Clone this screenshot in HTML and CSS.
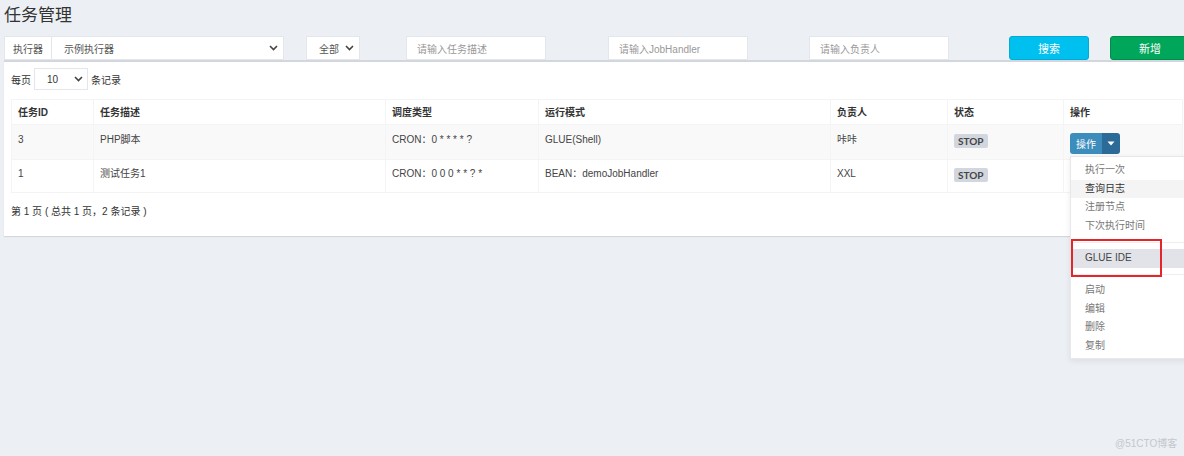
FILE: index.html
```html
<!DOCTYPE html>
<html lang="zh-CN">
<head>
<meta charset="utf-8">
<title>任务管理</title>
<link rel="stylesheet" href="styles.css">
</head>
<body>
<div class="page">
  <h1 class="title">任务管理</h1>
  <div class="toolbar">
    <div class="group">
      <span class="addon">执行器</span>
      <div class="fake-select wide"><span>示例执行器</span><svg class="chev" width="9" height="6" viewBox="0 0 9 6"><path d="M1 1l3.5 3.5L8 1" fill="none" stroke="#444" stroke-width="1.6"/></svg></div>
    </div>
    <div class="fake-select status"><span>全部</span><svg class="chev" width="9" height="6" viewBox="0 0 9 6"><path d="M1 1l3.5 3.5L8 1" fill="none" stroke="#444" stroke-width="1.6"/></svg></div>
    <div class="input in1">请输入任务描述</div>
    <div class="input in2">请输入JobHandler</div>
    <div class="input in3">请输入负责人</div>
    <button class="btn btn-search">搜索</button>
    <button class="btn btn-add">新增</button>
  </div>

  <div class="box">
    <div class="length">
      <span>每页</span>
      <div class="fake-select len"><span>10</span><svg class="chev" width="9" height="6" viewBox="0 0 9 6"><path d="M1 1l3.5 3.5L8 1" fill="none" stroke="#444" stroke-width="1.6"/></svg></div>
      <span>条记录</span>
    </div>
    <table class="grid">
      <colgroup>
        <col class="c1"><col class="c2"><col class="c3"><col class="c4"><col class="c5"><col class="c6"><col class="c7">
      </colgroup>
      <thead>
        <tr><th>任务ID</th><th>任务描述</th><th>调度类型</th><th>运行模式</th><th>负责人</th><th>状态</th><th>操作</th></tr>
      </thead>
      <tbody>
        <tr class="odd">
          <td>3</td><td>PHP脚本</td><td>CRON：0 * * * * ?</td><td>GLUE(Shell)</td><td>咔咔</td>
          <td><span class="label">STOP</span></td>
          <td>
            <div class="btn-group">
              <button class="op">操作</button><button class="op caret-btn"><svg width="8" height="5" viewBox="0 0 8 5"><path d="M0.5 0.5h7L4 4.5z" fill="#fff"/></svg></button>
              <ul class="menu">
                <li>执行一次</li>
                <li class="hover">查询日志</li>
                <li>注册节点</li>
                <li>下次执行时间</li>
                <li class="divider first"></li>
                <li class="active">GLUE IDE</li>
                <li class="divider"></li>
                <li>启动</li>
                <li>编辑</li>
                <li>删除</li>
                <li>复制</li>
                <li class="mark"></li>
              </ul>
            </div>
          </td>
        </tr>
        <tr>
          <td>1</td><td>测试任务1</td><td>CRON：0 0 0 * * ? *</td><td>BEAN：demoJobHandler</td><td>XXL</td>
          <td><span class="label">STOP</span></td>
          <td></td>
        </tr>
      </tbody>
    </table>
    <div class="info">第 1 页 ( 总共 1 页，2 条记录 )</div>
  </div>
</div>
<div class="watermark">@51CTO博客</div>
</body>
</html>
```

FILE: styles.css
```css
html, body {
  margin: 0;
  padding: 0;
}
body {
  width: 1184px;
  height: 456px;
  overflow: hidden;
  position: relative;
  background: #ecf0f5;
  font-family: "Liberation Sans", "Noto Sans CJK SC", sans-serif;
  font-size: 10px;
  color: #333;
}
.page {
  padding-left: 4px;
}
.title {
  margin: 0;
  padding-top: 4px;
  font-size: 17px;
  font-weight: normal;
  line-height: 24px;
  height: 24px;
  color: #333;
}
.toolbar {
  display: flex;
  align-items: stretch;
  height: 24px;
  margin-top: 8px;
}
.toolbar > * {
  flex-shrink: 0;
}
.group {
  display: flex;
  width: 280px;
}
.addon {
  width: 48px;
  border: 1px solid #e3e6ec;
  background: #fff;
  color: #555;
  display: flex;
  align-items: center;
  justify-content: center;
  box-sizing: border-box;
}
.fake-select {
  display: flex;
  align-items: center;
  justify-content: space-between;
  background: #fff;
  border: 1px solid #e3e6ec;
  box-sizing: border-box;
  color: #555;
}
.fake-select.wide {
  flex: 1;
  margin-left: -1px;
  padding: 0 5px 0 12px;
}
.fake-select.status {
  width: 54px;
  margin-left: 22px;
  padding: 0 5px 0 12px;
}
.input {
  width: 140px;
  box-sizing: border-box;
  background: #fff;
  border: 1px solid #e3e6ec;
  color: #999;
  display: flex;
  align-items: center;
  padding-left: 10px;
}
.in1 { margin-left: 46px; }
.in2 { margin-left: 62px; }
.in3 { margin-left: 61px; }
.btn {
  border: 0;
  border-radius: 3px;
  color: #fff;
  font-family: inherit;
  font-size: 11px;
  padding: 0;
  width: 80px;
}
.btn-search {
  background: #00c0ef;
  margin-left: 60px;
  border: 1px solid #00acd6;
}
.btn-add {
  background: #00a65a;
  margin-left: 21px;
  border: 1px solid #008d4c;
}
.box {
  width: 1190px;
  background: #fff;
  border-top: 2px solid #d2d6de;
  padding: 6px 7px 16px;
  box-sizing: border-box;
  box-shadow: 0 1px 1px rgba(0, 0, 0, 0.1);
}
.length {
  display: flex;
  align-items: center;
  height: 22px;
  color: #333;
}
.fake-select.len {
  width: 54px;
  height: 22px;
  margin: 0 3px;
  padding: 0 4px 0 12px;
  color: #333;
}
.grid {
  margin-top: 9px;
  border-collapse: collapse;
  table-layout: fixed;
  width: 1171px;
}
.c1 { width: 82px; }
.c2 { width: 292px; }
.c3 { width: 153px; }
.c4 { width: 292px; }
.c5 { width: 117px; }
.c6 { width: 116px; }
.c7 { width: 119px; }
.grid th, .grid td {
  border: 1px solid #f4f4f4;
  text-align: left;
  padding: 0 6px;
  line-height: 17px;
  vertical-align: top;
}
.grid th {
  height: 25px;
  padding-top: 4px;
  box-sizing: border-box;
  font-weight: bold;
  color: #333;
}
.grid tbody tr.odd td {
  background: #f9f9f9;
  height: 35px;
  padding-top: 6px;
  box-sizing: border-box;
}
.grid tbody td {
  height: 33px;
  padding-top: 5px;
  box-sizing: border-box;
  color: #444;
}
.label {
  display: inline-block;
  background: #d2d6de;
  color: #444;
  font-family: Lato, "Liberation Sans", sans-serif;
  font-weight: bold;
  font-size: 10px;
  line-height: 14px;
  padding: 0 4px;
  border-radius: 2px;
  margin-top: 3px;
}
.btn-group {
  position: relative;
  display: flex;
  margin-top: 2px;
}
.op {
  border: 0;
  height: 21px;
  width: 32px;
  padding: 0;
  background: #3c8dbc;
  color: #fff;
  font-family: inherit;
  font-size: 10px;
  border-radius: 3px 0 0 3px;
}
.op.caret-btn {
  width: 18px;
  background: #2c6a98;
  border-radius: 0 3px 3px 0;
  display: flex;
  align-items: center;
  justify-content: center;
}
.menu {
  position: absolute;
  left: 0;
  top: 23px;
  width: 160px;
  margin: 0;
  padding: 4px 0 3px;
  list-style: none;
  background: #fff;
  border: 1px solid #e6e8ec;
  box-shadow: 0 2px 6px rgba(0, 0, 0, 0.08);
  z-index: 5;
}
.menu li {
  line-height: 18.6px;
  height: 18.6px;
  padding: 0 14px;
  color: #777;
  white-space: nowrap;
}
.menu li.hover {
  background: #f4f4f4;
  color: #333;
}
.menu li.active {
  background: #e1e3e9;
  color: #444;
}
.menu li.divider {
  height: 1px;
  line-height: 0;
  padding: 0;
  margin: 6px 0;
  background: #eee;
}
.menu li.divider.first {
  margin: 6.5px 0;
}
.menu li.mark {
  position: absolute;
  left: 0;
  top: 82px;
  width: 91px;
  height: 38px;
  padding: 0;
  box-sizing: border-box;
  border: 2px solid #e4262b;
  background: transparent;
}
.info {
  margin-top: 10px;
  line-height: 17px;
  color: #333;
}
.watermark {
  position: absolute;
  left: 1115px;
  top: 436px;
  font-size: 10px;
  color: #c4c7cc;
  line-height: 16px;
}
```
